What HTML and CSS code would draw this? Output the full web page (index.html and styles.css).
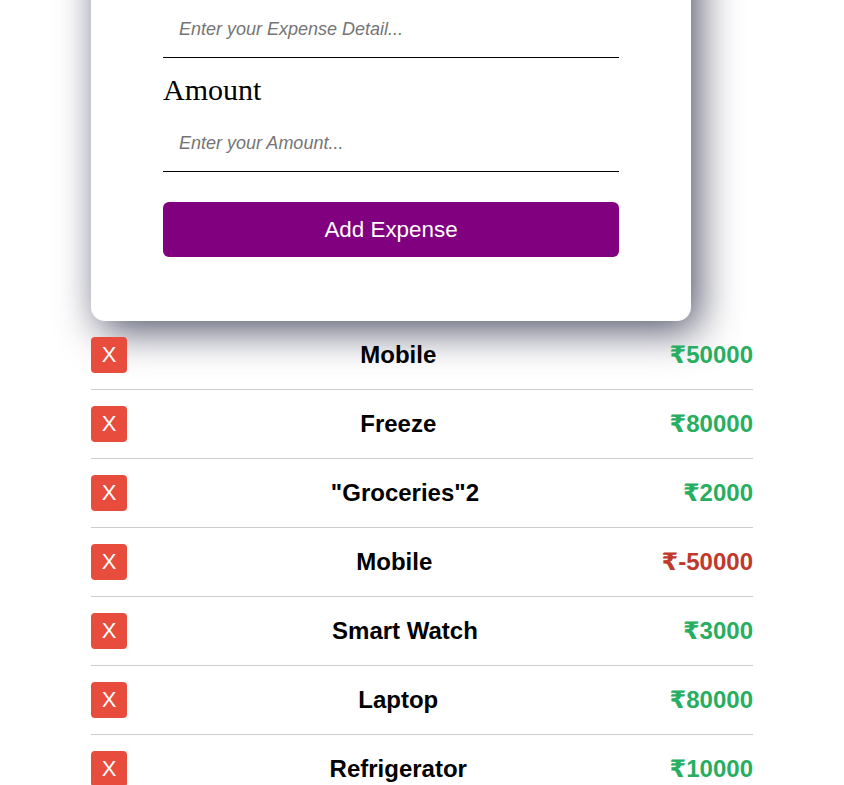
FILE: index.html
```html
<!DOCTYPE html>
<html lang="en">
<head>
<meta charset="UTF-8">
<title>Expense Tracker</title>
<link rel="stylesheet" href="styles.css">
</head>
<body>
<div class="container">
  <form class="card">
    <input class="field-input" id="detail" type="text" placeholder="Enter your Expense Detail...">
    <label class="field-label" for="amount">Amount</label>
    <input class="field-input" id="amount" type="text" placeholder="Enter your Amount...">
    <button class="add-btn" type="button">Add Expense</button>
  </form>
  <ul class="list">
    <li class="row"><button class="del">X</button><span class="name">Mobile</span><span class="amt pos">₹50000</span></li>
    <li class="row"><button class="del">X</button><span class="name">Freeze</span><span class="amt pos">₹80000</span></li>
    <li class="row"><button class="del">X</button><span class="name">"Groceries"2</span><span class="amt pos">₹2000</span></li>
    <li class="row"><button class="del">X</button><span class="name">Mobile</span><span class="amt neg">₹-50000</span></li>
    <li class="row"><button class="del">X</button><span class="name">Smart Watch</span><span class="amt pos">₹3000</span></li>
    <li class="row"><button class="del">X</button><span class="name">Laptop</span><span class="amt pos">₹80000</span></li>
    <li class="row"><button class="del">X</button><span class="name">Refrigerator</span><span class="amt pos">₹10000</span></li>
  </ul>
</div>
</body>
</html>
```

FILE: styles.css
```css
html, body {
  margin: 0;
  padding: 0;
  background: #ffffff;
  font-family: "Liberation Serif", "Times New Roman", serif;
  overflow: hidden;
}

.container {
  width: 662px;
  margin: 0 auto;
}

.card {
  width: 600px;
  box-sizing: border-box;
  margin-top: -70px;
  padding: 74px 72px 64px;
  background: #ffffff;
  border-radius: 14px;
  box-shadow: 8px 10px 40px rgba(40, 42, 70, 0.8);
  display: flex;
  flex-direction: column;
}

.field-label {
  display: block;
  font-size: 30px;
  line-height: 34px;
  color: #000;
  margin-bottom: 11px;
}

.field-input {
  display: block;
  width: 100%;
  box-sizing: border-box;
  border: none;
  border-bottom: 1px solid #000;
  padding: 15px 16px 17px;
  margin: 0 0 15px;
  font-family: "Liberation Sans", Arial, sans-serif;
  font-size: 18px;
  font-style: italic;
  outline: none;
  background: transparent;
}

.field-input::placeholder {
  color: #757575;
}

.add-btn {
  margin-top: 15px;
  height: 55px;
  width: 100%;
  border: none;
  border-radius: 6px;
  background: #800080;
  color: #ffffff;
  font-family: "Liberation Sans", Arial, sans-serif;
  font-size: 22.4px;
}

.list {
  list-style: none;
  margin: 0;
  padding: 0;
  font-family: "Liberation Sans", Arial, "DejaVu Sans", sans-serif;
}

.row {
  display: flex;
  align-items: center;
  justify-content: space-between;
  padding: 16px 0;
  border-bottom: 1px solid #cccccc;
}

.del {
  width: 36px;
  height: 36px;
  padding: 0;
  border: none;
  border-radius: 4px;
  background: #e74c3c;
  color: #ffffff;
  font-family: "Liberation Sans", Arial, sans-serif;
  font-size: 22px;
}

.name {
  font-size: 24px;
  font-weight: bold;
  color: #000;
}

.amt {
  font-size: 24px;
  font-weight: bold;
}

.pos { color: #27ae60; }
.neg { color: #c0392b; }
```
